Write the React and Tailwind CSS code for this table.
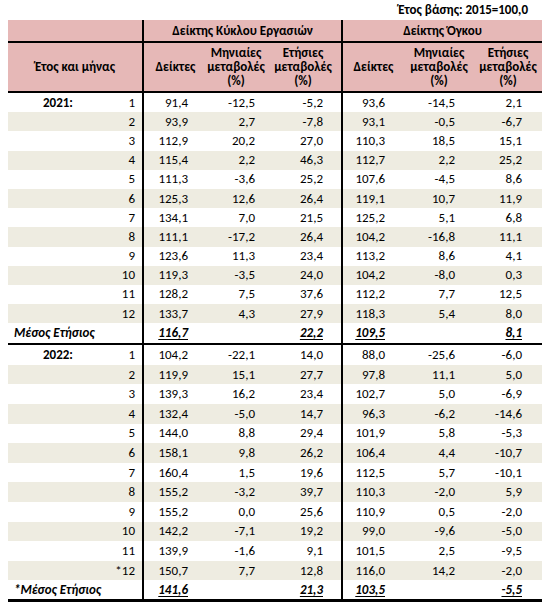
import React from 'react';

const y2021 = [
  ['1', '91,4', '-12,5', '-5,2', '93,6', '-14,5', '2,1'],
  ['2', '93,9', '2,7', '-7,8', '93,1', '-0,5', '-6,7'],
  ['3', '112,9', '20,2', '27,0', '110,3', '18,5', '15,1'],
  ['4', '115,4', '2,2', '46,3', '112,7', '2,2', '25,2'],
  ['5', '111,3', '-3,6', '25,2', '107,6', '-4,5', '8,6'],
  ['6', '125,3', '12,6', '26,4', '119,1', '10,7', '11,9'],
  ['7', '134,1', '7,0', '21,5', '125,2', '5,1', '6,8'],
  ['8', '111,1', '-17,2', '26,4', '104,2', '-16,8', '11,1'],
  ['9', '123,6', '11,3', '23,4', '113,2', '8,6', '4,1'],
  ['10', '119,3', '-3,5', '24,0', '104,2', '-8,0', '0,3'],
  ['11', '128,2', '7,5', '37,6', '112,2', '7,7', '12,5'],
  ['12', '133,7', '4,3', '27,9', '118,3', '5,4', '8,0'],
];

const y2022 = [
  ['1', '104,2', '-22,1', '14,0', '88,0', '-25,6', '-6,0'],
  ['2', '119,9', '15,1', '27,7', '97,8', '11,1', '5,0'],
  ['3', '139,3', '16,2', '23,4', '102,7', '5,0', '-6,9'],
  ['4', '132,4', '-5,0', '14,7', '96,3', '-6,2', '-14,6'],
  ['5', '144,0', '8,8', '29,4', '101,9', '5,8', '-5,3'],
  ['6', '158,1', '9,8', '26,2', '106,4', '4,4', '-10,7'],
  ['7', '160,4', '1,5', '19,6', '112,5', '5,7', '-10,1'],
  ['8', '155,2', '-3,2', '39,7', '110,3', '-2,0', '5,9'],
  ['9', '155,2', '0,0', '25,6', '110,9', '0,5', '-2,0'],
  ['10', '142,2', '-7,1', '19,2', '99,0', '-9,6', '-5,0'],
  ['11', '139,9', '-1,6', '9,1', '101,5', '2,5', '-9,5'],
  ['*12', '150,7', '7,7', '12,8', '116,0', '14,2', '-2,0'],
];

// column cell classes (width + right padding for the numbers)
const cols = [
  'w-[65px] border-l-2 border-black pr-[19px]',
  'w-[58px] pr-[10px]',
  'w-[76px] pr-[18px]',
  'w-[63px] border-l-2 border-black pr-[19px]',
  'w-[70px] pr-[19px]',
  'w-[68px] pr-[20px]',
];

const DataRow = ({ row, year, shaded, h }) => (
  <div className={`flex ${h} ${shaded ? 'bg-[#eeece1]' : 'bg-white'}`}>
    <div className="w-[134px] flex items-center">
      <span className="w-[100px] text-center font-bold">{year}</span>
      <span className="flex-1 text-right pr-[7px]">{row[0]}</span>
    </div>
    {row.slice(1).map((v, i) => (
      <div key={i} className={`${cols[i]} flex items-center justify-end`}>
        {v}
      </div>
    ))}
  </div>
);

const AvgRow = ({ label, vals, border }) => (
  <div className={`flex h-[22px] bg-white ${border} border-black`}>
    <div className="w-[134px] flex items-center pl-[6px] font-bold italic">{label}</div>
    {vals.map((v, i) => (
      <div key={i} className={`${cols[i]} flex items-center justify-end font-bold italic underline underline-offset-2`}>
        {v}
      </div>
    ))}
  </div>
);

const SubHead = ({ lines, cls }) => (
  <div className={`${cls} flex flex-col items-center justify-center leading-[14px] text-center`}>
    {lines.map((l) => (
      <span key={l}>{l}</span>
    ))}
  </div>
);

export default function App() {
  return (
    <div
      className="w-[555px] h-[610px] bg-white text-[13px] leading-[16px] text-black pl-[8px]"
      style={{ fontFamily: "Carlito, 'Liberation Sans', sans-serif" }}
    >
      <div className="w-[534px]">
        <div className="h-[20px] flex items-center justify-end pr-[14px] font-bold">
          Έτος βάσης: 2015=100,0
        </div>

        {/* header */}
        <div className="bg-[#e6b8b7] font-bold">
          <div className="flex h-[23px] border-b-2 border-black">
            <div className="w-[134px]" />
            <div className="w-[199px] border-l-2 border-black flex items-center justify-center">
              Δείκτης Κύκλου Εργασιών
            </div>
            <div className="w-[201px] border-l-2 border-black flex items-center justify-center">
              Δείκτης Όγκου
            </div>
          </div>
          <div className="flex h-[50px] border-b-2 border-black">
            <div className="w-[134px] flex items-center justify-center">Έτος και μήνας</div>
            <SubHead cls="w-[65px] border-l-2 border-black" lines={['Δείκτες']} />
            <SubHead cls="w-[58px]" lines={['Μηνιαίες', 'μεταβολές', '(%)']} />
            <SubHead cls="w-[76px]" lines={['Ετήσιες', 'μεταβολές', '(%)']} />
            <SubHead cls="w-[63px] border-l-2 border-black" lines={['Δείκτες']} />
            <SubHead cls="w-[70px]" lines={['Μηνιαίες', 'μεταβολές', '(%)']} />
            <SubHead cls="w-[68px]" lines={['Ετήσιες', 'μεταβολές', '(%)']} />
          </div>
        </div>

        {/* 2021 */}
        {y2021.map((r, i) => (
          <DataRow key={r[0]} row={r} year={i === 0 ? '2021:' : ''} shaded={i % 2 === 1} h="h-[19.2px]" />
        ))}
        <AvgRow label="Μέσος Ετήσιος" vals={['116,7', '', '22,2', '109,5', '', '8,1']} border="border-b-2" />

        {/* 2022 */}
        {y2022.map((r, i) => (
          <DataRow key={r[0]} row={r} year={i === 0 ? '2022:' : ''} shaded={i % 2 === 1} h="h-[19.6px]" />
        ))}
        <AvgRow label="*Μέσος Ετήσιος" vals={['141,6', '', '21,3', '103,5', '', '-5,5']} border="border-b-[3px]" />
      </div>
    </div>
  );
}
